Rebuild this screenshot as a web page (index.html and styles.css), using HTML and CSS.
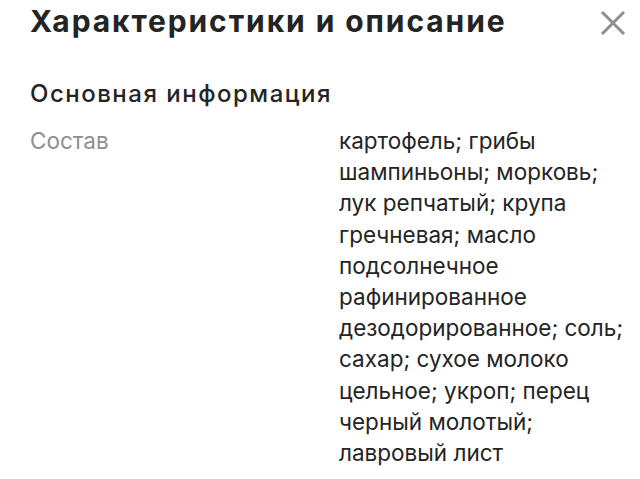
FILE: index.html
```html
<!DOCTYPE html>
<html lang="ru">
<head>
<meta charset="utf-8">
<link rel="stylesheet" href="styles.css">
</head>
<body>
<div class="panel">
  <header class="head">
    <h1 class="title">Характеристики и описание</h1>
    <button class="close" aria-label="Закрыть">
      <svg width="26" height="26" viewBox="0 0 26 26"><path d="M2 2L24 24M24 2L2 24" stroke="#8e8e93" stroke-width="3" fill="none"/></svg>
    </button>
  </header>
  <h2 class="subtitle">Основная информация</h2>
  <div class="row">
    <div class="label">Состав</div>
    <div class="value">картофель; грибы шампиньоны; морковь; лук репчатый; крупа гречневая; масло подсолнечное рафинированное дезодорированное; соль; сахар; сухое молоко цельное; укроп; перец черный молотый; лавровый лист</div>
  </div>
</div>
</body>
</html>
```

FILE: styles.css
```css
html, body {
  margin: 0;
  padding: 0;
  background: #fff;
}
body {
  font-family: Inter, "Noto Sans", sans-serif;
  color: #242424;
}
.panel {
  padding: 3px 14px 0 30px;
}
.head {
  display: flex;
  justify-content: space-between;
  align-items: center;
}
.title {
  margin: 0;
  font-size: 30px;
  font-weight: 700;
  line-height: 36px;
  letter-spacing: 1.9px;
}
.close {
  border: 0;
  background: none;
  padding: 0;
  margin-top: 4px;
  display: flex;
}
.subtitle {
  margin: 40px 0 0;
  font-size: 24px;
  font-weight: 500;
  line-height: 30px;
  letter-spacing: 1.5px;
}
.row {
  display: grid;
  grid-template-columns: 309px 1fr;
  margin-top: 16px;
  font-size: 22.5px;
  line-height: 31.2px;
}
.label {
  color: #8e8e93;
}
.value {
  width: 293px;
}
```
